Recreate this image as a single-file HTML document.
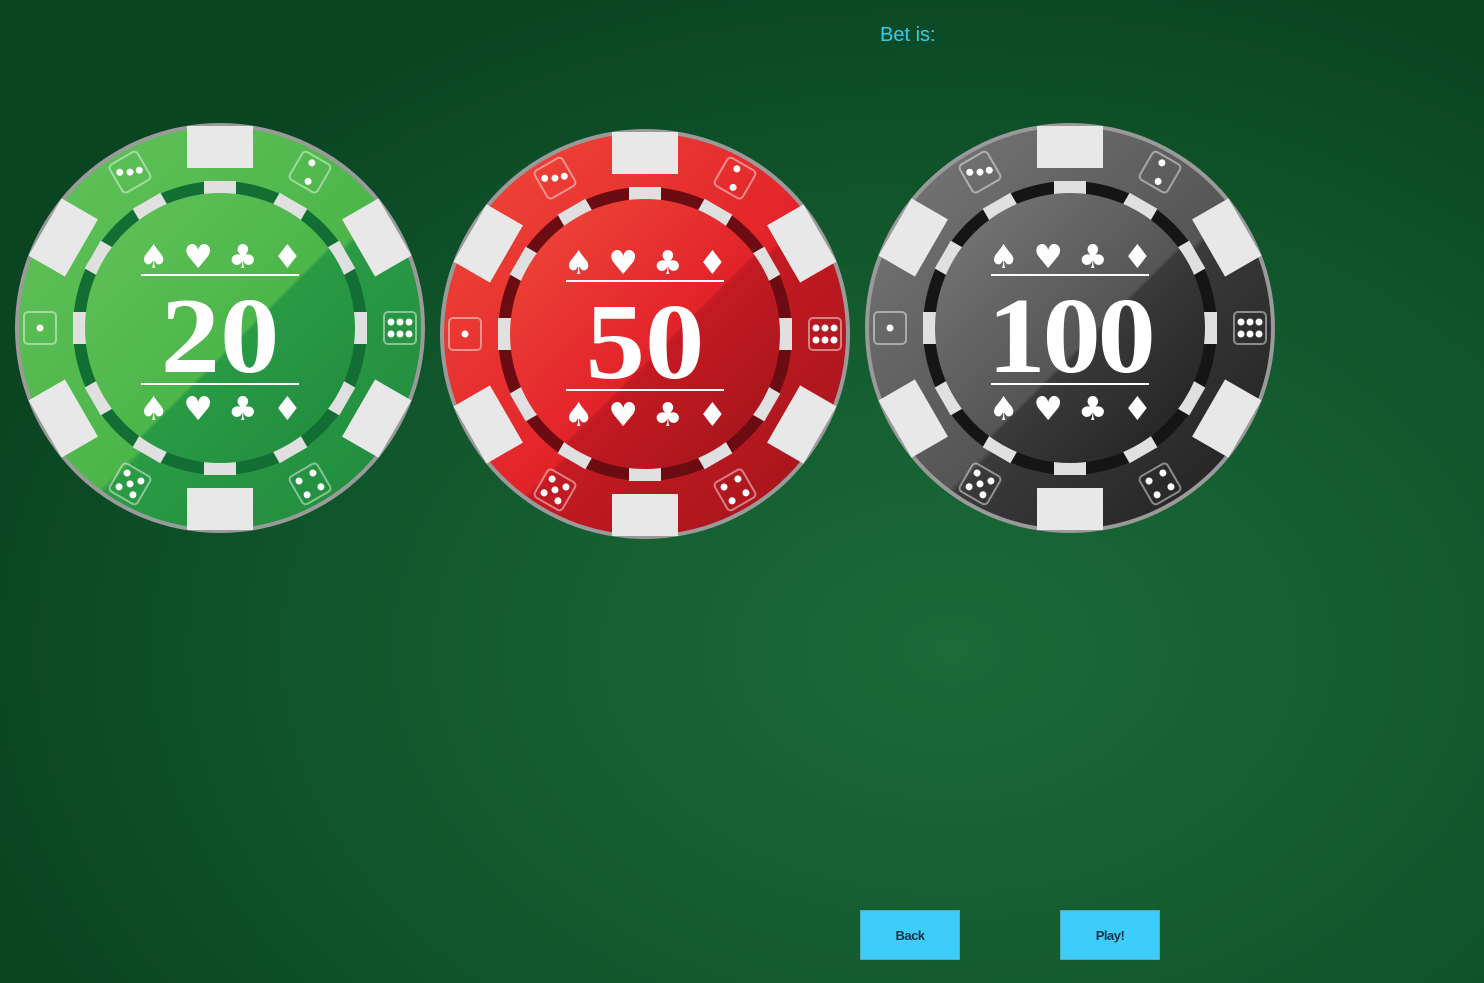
<!DOCTYPE html>
<html><head><meta charset="utf-8">
<style>
html,body{margin:0;padding:0;width:1484px;height:983px;overflow:hidden}
body{background:radial-gradient(ellipse 1000px 700px at 950px 650px,#1b6a38 0%,#135b2f 50%,#0a4522 100%);font-family:"Liberation Sans",sans-serif;position:relative}
.bet{position:absolute;left:880px;top:24px;color:#33ccee;font-size:20px}
.btn{position:absolute;top:910px;width:98px;height:48px;background:#3dcdfb;border:1px solid #5aa8c0;font-size:13px;color:#113344;display:flex;align-items:center;justify-content:center;font-weight:bold;letter-spacing:-0.5px}
svg{position:absolute;left:0;top:0}
</style></head><body>
<div class="bet">Bet is:</div>
<div class="btn" style="left:860px">Back</div>
<div class="btn" style="left:1060px">Play!</div>
<svg width="1484" height="983" viewBox="0 0 1484 983">
<defs>
<g id="stripes" fill="#e8e8e8">
<rect x="-33" y="-202" width="66" height="42"/>
<rect x="-33" y="-202" width="66" height="42" transform="rotate(60)"/>
<rect x="-33" y="-202" width="66" height="42" transform="rotate(120)"/>
<rect x="-33" y="-202" width="66" height="42" transform="rotate(180)"/>
<rect x="-33" y="-202" width="66" height="42" transform="rotate(240)"/>
<rect x="-33" y="-202" width="66" height="42" transform="rotate(300)"/>
</g>
<g id="dashes" fill="#e0e0e0">
<rect x="-16" y="-147" width="32" height="14"/>
<rect x="-16" y="-147" width="32" height="14" transform="rotate(30)"/>
<rect x="-16" y="-147" width="32" height="14" transform="rotate(60)"/>
<rect x="-16" y="-147" width="32" height="14" transform="rotate(90)"/>
<rect x="-16" y="-147" width="32" height="14" transform="rotate(120)"/>
<rect x="-16" y="-147" width="32" height="14" transform="rotate(150)"/>
<rect x="-16" y="-147" width="32" height="14" transform="rotate(180)"/>
<rect x="-16" y="-147" width="32" height="14" transform="rotate(210)"/>
<rect x="-16" y="-147" width="32" height="14" transform="rotate(240)"/>
<rect x="-16" y="-147" width="32" height="14" transform="rotate(270)"/>
<rect x="-16" y="-147" width="32" height="14" transform="rotate(300)"/>
<rect x="-16" y="-147" width="32" height="14" transform="rotate(330)"/>
</g>
<g id="die"><rect x="-16" y="-16" width="32" height="32" rx="4" fill="none" stroke="rgba(255,255,255,0.45)" stroke-width="2"/></g>
<g id="dice" fill="#fff">
<g transform="rotate(-90) translate(0,-180) rotate(90)"><use href="#die"/><circle r="3.5"/></g>
<g transform="rotate(90) translate(0,-180) rotate(-90)"><use href="#die"/><circle cx="-9" cy="-6" r="3.5"/><circle cy="-6" r="3.5"/><circle cx="9" cy="-6" r="3.5"/><circle cx="-9" cy="6" r="3.5"/><circle cy="6" r="3.5"/><circle cx="9" cy="6" r="3.5"/></g>
<g transform="rotate(-30) translate(0,-180)"><use href="#die"/><circle cx="-9" cy="-5" r="3.5"/><circle cy="0" r="3.5"/><circle cx="9" cy="3" r="3.5"/></g>
<g transform="rotate(30) translate(0,-180)"><use href="#die"/><circle cx="-3" cy="-9" r="3.5"/><circle cx="3" cy="9" r="3.5"/></g>
<g transform="rotate(210) translate(0,-180) rotate(180)"><use href="#die"/><circle cx="-8" cy="-8" r="3.5"/><circle cx="8" cy="-8" r="3.5"/><circle r="3.5"/><circle cx="-8" cy="8" r="3.5"/><circle cx="8" cy="8" r="3.5"/></g>
<g transform="rotate(150) translate(0,-180) rotate(180)"><use href="#die"/><circle cx="-8" cy="-8" r="3.5"/><circle cx="8" cy="-8" r="3.5"/><circle cx="-8" cy="8" r="3.5"/><circle cx="8" cy="8" r="3.5"/></g>
</g>
<g id="face" fill="#fff">
<text x="8" y="-60" font-family="DejaVu Sans,sans-serif" font-size="33" text-anchor="middle" letter-spacing="15">♠♥♣♦</text>
<rect x="-79" y="-54" width="158" height="2"/>
<rect x="-79" y="55" width="158" height="2"/>
<text x="8" y="92" font-family="DejaVu Sans,sans-serif" font-size="33" text-anchor="middle" letter-spacing="15">♠♥♣♦</text>
</g>
<linearGradient id="gG" x1="0" y1="0" x2="1" y2="1"><stop offset="0" stop-color="#62c25a"/><stop offset="0.55" stop-color="#4cb64a"/><stop offset="0.56" stop-color="#2a9a45"/><stop offset="1" stop-color="#1f8a3e"/></linearGradient>
<linearGradient id="rG" x1="0" y1="0" x2="1" y2="1"><stop offset="0" stop-color="#f04a3a"/><stop offset="0.55" stop-color="#e2232a"/><stop offset="0.56" stop-color="#c41a22"/><stop offset="1" stop-color="#a0141c"/></linearGradient>
<linearGradient id="kG" x1="0" y1="0" x2="1" y2="1"><stop offset="0" stop-color="#7a7a7a"/><stop offset="0.55" stop-color="#555"/><stop offset="0.56" stop-color="#3a3a3a"/><stop offset="1" stop-color="#1e1e1e"/></linearGradient>
</defs>

<g transform="translate(220,328)">
<circle r="205" fill="#9a9a9a"/><circle r="201" fill="url(#gG)"/>
<use href="#stripes"/><use href="#dice"/>
<circle r="147" fill="#136e34"/><use href="#dashes"/>
<circle r="135" fill="url(#gG)"/>
<use href="#face"/>
<text transform="translate(0,44) scale(1.1,1)" font-family="Liberation Serif,serif" font-weight="bold" font-size="108" fill="#fff" text-anchor="middle">20</text>
</g>
<g transform="translate(645,334)">
<circle r="205" fill="#9a9a9a"/><circle r="201" fill="url(#rG)"/>
<use href="#stripes"/><use href="#dice"/>
<circle r="147" fill="#6a0c12"/><use href="#dashes"/>
<circle r="135" fill="url(#rG)"/>
<use href="#face"/>
<text transform="translate(0,44) scale(1.1,1)" font-family="Liberation Serif,serif" font-weight="bold" font-size="108" fill="#fff" text-anchor="middle">50</text>
</g>
<g transform="translate(1070,328)">
<circle r="205" fill="#9a9a9a"/><circle r="201" fill="url(#kG)"/>
<use href="#stripes"/><use href="#dice"/>
<circle r="147" fill="#151515"/><use href="#dashes"/>
<circle r="135" fill="url(#kG)"/>
<use href="#face"/>
<text transform="translate(0,44) scale(1.08,1)" font-family="Liberation Serif,serif" font-weight="bold" font-size="108" fill="#fff" text-anchor="middle" letter-spacing="-3">100</text>
</g>
</svg>
</body></html>
